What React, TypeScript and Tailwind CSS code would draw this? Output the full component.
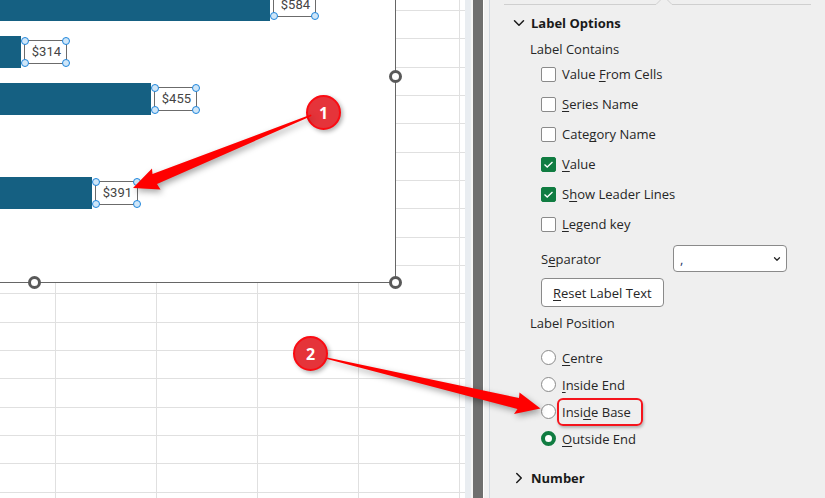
import React, { useState } from 'react';
import { ChevronDown, ChevronRight } from 'lucide-react';
import clsx from 'clsx';

interface Bar {
  amount: number | null;
  width: string;
}

interface Option {
  id: string;
  // the part between the underscores is the underlined access key
  text: string;
}

const bars: Bar[] = [
  { amount: 584, width: 'w-[270px]' },
  { amount: 314, width: 'w-[21px]' },
  { amount: 455, width: 'w-[151px]' },
  { amount: null, width: 'w-0' },
  { amount: 391, width: 'w-[92px]' },
];

const labelContains: Option[] = [
  { id: 'cells', text: 'Value _F_rom Cells' },
  { id: 'series', text: '_S_eries Name' },
  { id: 'category', text: 'Cate_g_ory Name' },
  { id: 'value', text: '_V_alue' },
  { id: 'leader', text: 'S_h_ow Leader Lines' },
  { id: 'legend', text: '_L_egend key' },
];

const labelPositions: Option[] = [
  { id: 'centre', text: '_C_entre' },
  { id: 'inside-end', text: '_I_nside End' },
  { id: 'inside-base', text: 'Insi_d_e Base' },
  { id: 'outside-end', text: '_O_utside End' },
];

const rows = Array.from({ length: 17 }, (_, i) => i);
const columns = Array.from({ length: 16 }, (_, i) => i);

const KeyText = ({ text }: { text: string }) => {
  const [before, key, after] = text.split('_');
  return (
    <>
      {before}
      <u className="underline-offset-2 [text-decoration-skip-ink:none]">{key}</u>
      {after}
    </>
  );
};

const SheetRow = ({ className }: { className: string }) => (
  <div className={clsx('flex shrink-0 border-[#e0e0e0]', className)}>
    <div className="w-14 shrink-0 border-r border-[#e0e0e0]" />
    {columns.map((c) => (
      <div key={c} className="w-[101px] shrink-0 border-r border-[#e0e0e0]" />
    ))}
  </div>
);

const DataLabel = ({ amount }: { amount: number }) => {
  const dot = 'absolute size-2 rounded-full border border-[#1f86dc] bg-[#cfe6f8]';
  return (
    <div className="relative ml-[3px] flex h-6 w-[43px] items-center justify-end border border-[#6b6b6b] pr-[5px] font-[Roboto,sans-serif] text-[13px] leading-4 text-[#444]">
      ${amount}
      <span className={clsx(dot, '-left-1 -top-1')} />
      <span className={clsx(dot, '-right-1 -top-1')} />
      <span className={clsx(dot, '-bottom-1 -left-1')} />
      <span className={clsx(dot, '-bottom-1 -right-1')} />
    </div>
  );
};

const Badge = ({ n, className }: { n: number; className: string }) => (
  <span
    className={clsx(
      'absolute flex size-[35px] items-center justify-center rounded-full border-2 border-[#fb0b12] bg-[#e5343a] font-["Open_Sans",sans-serif] text-base font-bold text-white shadow-[2px_2px_4px_rgba(0,0,0,0.3)]',
      className
    )}
  >
    {n}
  </span>
);

const Chart = () => {
  const knob = 'absolute size-[13px] rounded-full border-[3px] border-[#595959] bg-white';
  return (
    <div className="absolute left-0 top-0 h-[283px] w-[396px] border-b border-r border-[#666] bg-white">
      <div className="h-full overflow-hidden">
        <div className="-mt-[11px] flex flex-col gap-[15px]">
          {bars.map((bar, i) => (
            <div key={i} className="flex h-8 items-center">
              <div className={clsx('h-full bg-[#156082]', bar.width)} />
              {bar.amount !== null && <DataLabel amount={bar.amount} />}
            </div>
          ))}
        </div>
      </div>
      <span className={clsx(knob, '-right-[7px] top-[70px]')} />
      <span className={clsx(knob, '-bottom-[7px] -right-[7px]')} />
      <span className={clsx(knob, '-bottom-[7px] left-7')} />

      <Badge n={1} className="left-[306px] top-[95px]" />
      <svg
        className="absolute left-[130px] top-[105px] drop-shadow-[2px_3px_3px_rgba(0,0,0,0.35)]"
        width="190"
        height="90"
        viewBox="130 105 190 90"
        fill="#ff0000"
      >
        <path d="M133 188 L152 168.500 L152.500 174 L311 114.500 L311.500 116 L157 184 L160.500 189.500 Z" />
      </svg>
    </div>
  );
};

const FormatPanel = () => {
  const [checked, setChecked] = useState<string[]>(['value', 'leader']);
  const [position, setPosition] = useState('outside-end');
  const [separator, setSeparator] = useState(',');

  const toggle = (id: string) => {
    setChecked(checked.includes(id) ? checked.filter((c) => c !== id) : [...checked, id]);
  };

  return (
    <aside className="relative w-[335px] shrink-0 bg-[#efefef] font-['Open_Sans',sans-serif] text-[13px] leading-5 text-[#262626]">
      {/* bottom edge of the two tabs */}
      <div className="flex h-[5px] pl-3.5 pr-3.5">
        <div className="w-[152px] border-b border-[#cfcfcf]" />
        <svg className="h-[5px] w-4" viewBox="0 0 16 5" fill="none" stroke="#cfcfcf">
          <path d="M0 4.500 L4.500 0 M11.500 0 L16 4.500" />
        </svg>
        <div className="flex-1 border-b border-[#cfcfcf]" />
      </div>

      <div className="mt-2 px-5">
        <h2 className="flex items-center font-bold text-[#1a1a1a]">
          <ChevronDown size={18} className="mr-[3px]" />
          Label Options
        </h2>
      </div>

      <div className="mt-1.5 pl-10">
        <fieldset>
          <legend>Label Contains</legend>
          <div className="pl-[11px]">
            {labelContains.map((option) => (
              <label key={option.id} className="flex h-[30px] items-center">
                <span className="relative mr-1.5 size-[15px]">
                  <input
                    type="checkbox"
                    checked={checked.includes(option.id)}
                    onChange={() => toggle(option.id)}
                    className="block size-[15px] appearance-none rounded-[2px] border border-[#8a8a8a] bg-white checked:border-[#107c41] checked:bg-[#107c41]"
                  />
                  <svg className="pointer-events-none absolute inset-0" viewBox="0 0 15 15" fill="none" stroke="#fff" strokeWidth="1.300">
                    {checked.includes(option.id) && <path d="M3.500 7.500 L6.200 10 L11.500 5" />}
                  </svg>
                </span>
                <span>
                  <KeyText text={option.text} />
                </span>
              </label>
            ))}
          </div>
        </fieldset>

        <div className="mt-1.5 flex items-center pl-[11px]">
          <label htmlFor="separator" className="w-[132px]">
            <KeyText text="S_e_parator" />
          </label>
          <div className="relative">
            <select
              id="separator"
              value={separator}
              onChange={(e) => setSeparator(e.target.value)}
              className="block h-[27px] w-[114px] appearance-none rounded border border-[#8a8a8a] bg-white pl-1.5 text-[#2b3a67]"
            >
              <option value=",">,</option>
              <option value=";">;</option>
              <option value=".">.</option>
            </select>
            <ChevronDown size={10} strokeWidth={3} className="pointer-events-none absolute right-[5px] top-[9px]" />
          </div>
        </div>

        <button className="ml-[11px] mt-1.5 block h-[29px] rounded border border-[#8a8a8a] bg-white px-[11px]">
          <KeyText text="_R_eset Label Text" />
        </button>

        <fieldset className="mt-1.5">
          <legend>Label Position</legend>
          <div className="mt-[11px] pl-[11px]">
            {labelPositions.map((option) => (
              <label key={option.id} className="flex h-[27px] items-center">
                <input
                  type="radio"
                  name="position"
                  checked={position === option.id}
                  onChange={() => setPosition(option.id)}
                  className="mr-1.5 size-[15px] appearance-none rounded-full border border-[#8a8a8a] bg-white checked:border-4 checked:border-[#107c41]"
                />
                <span className="relative">
                  <KeyText text={option.text} />
                  {option.id === 'inside-base' && (
                    <span className="absolute -inset-y-1 -left-[5px] -right-3 rounded-md border-2 border-[#f5141c] shadow-[1px_2px_3px_rgba(0,0,0,0.25)]" />
                  )}
                </span>
              </label>
            ))}
          </div>
        </fieldset>
      </div>

      <div className="mt-4 px-5">
        <h2 className="flex items-center font-bold text-[#1a1a1a]">
          <ChevronRight size={18} className="mr-[3px]" />
          Number
        </h2>
      </div>

      <Badge n={2} className="-left-[197px] top-[336px]" />
      <svg
        className="pointer-events-none absolute -left-[170px] top-[350px] drop-shadow-[2px_3px_3px_rgba(0,0,0,0.35)]"
        width="230"
        height="75"
        viewBox="320 350 230 75"
        fill="#ff0000"
      >
        <path d="M327 357.500 L519 398 L519.500 392.500 L540.500 408.500 L514 414 L517.500 409 L327 359 Z" />
      </svg>
    </aside>
  );
};

const App: React.FC = () => {
  return (
    <div className="flex min-h-screen bg-white">
      <main className="relative flex min-w-0 flex-1 flex-col overflow-hidden">
        <SheetRow className="h-[11px] border-b" />
        {rows.map((r) => (
          <SheetRow key={r} className={clsx('border-b', r % 3 === 1 ? 'h-[29px]' : 'h-7')} />
        ))}
        <SheetRow className="flex-1" />
        <Chart />
      </main>

      {/* splitter between the sheet and the pane */}
      <div className="flex shrink-0">
        <div className="w-1.5 bg-[#e9edf1]" />
        <div className="w-0.5 bg-[#f6f6f6]" />
        <div className="w-2.5 bg-[#6f6f6f]" />
        <div className="w-px bg-white" />
        <div className="w-[5px] bg-[#f1f1f2]" />
        <div className="w-px bg-[#d3d9e1]" />
      </div>

      <FormatPanel />
    </div>
  );
};

export default App;
